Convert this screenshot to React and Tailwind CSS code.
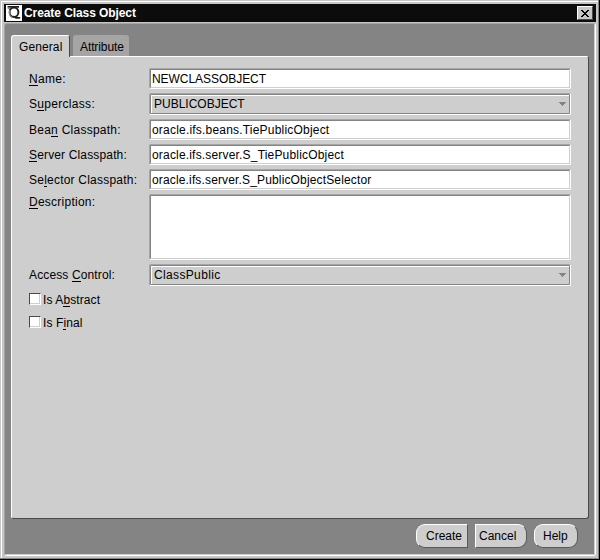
import React, { useState } from "react";
import clsx from "clsx";

// Label with an underlined mnemonic letter
const Label = ({ text, mnemonic, className }) => (
  <span className={clsx("block whitespace-pre leading-[14px]", className)}>
    {text.slice(0, mnemonic)}
    <span className="border-b border-black inline-block h-[14px]">
      {text[mnemonic]}
    </span>
    {text.slice(mnemonic + 1)}
  </span>
);

const Row = ({ text, mnemonic, spacing, className, labelPad = "pt-1", children }) => (
  <div className={clsx("flex", className)}>
    <div className={clsx("w-[120px] shrink-0", labelPad)}>
      <Label text={text} mnemonic={mnemonic} className={spacing} />
    </div>
    {children}
  </div>
);

const Field = ({ value, spacing, className }) => (
  <div
    className={clsx(
      "w-[422px] rounded-[2px] border border-t-[#a5a5a5] border-l-[#a5a5a5] border-r-white border-b-white",
      className
    )}
  >
    <div className="h-full rounded-[1px] border border-t-[#848484] border-l-[#848484] border-r-[#cecece] border-b-[#cecece] bg-white pl-px pt-[2px]">
      <span className={clsx("block leading-[14px]", spacing)}>{value}</span>
    </div>
  </div>
);

const Combo = ({ value, spacing }) => (
  <div className="h-[22px] w-[422px] rounded-[2px] border border-t-[#a5a5a5] border-l-[#a5a5a5] border-r-white border-b-white">
    <div className="h-full rounded-[1px] border border-[#848484]">
      <div className="flex h-full items-start justify-between border-l border-t border-white pl-[2px] pr-[3px]">
        <span className={clsx("mt-px block leading-[14px]", spacing)}>{value}</span>
        <svg
          className="mt-[6px]"
          width="7"
          height="4"
          viewBox="0 0 7 4"
          shapeRendering="crispEdges"
        >
          <path d="M0 0h7v1H0zM1 1h5v1H1zM2 2h3v1H2zM3 3h1v1H3z" fill="#848484" />
        </svg>
      </div>
    </div>
  </div>
);

const Check = ({ text, mnemonic, spacing, className }) => {
  const [checked, setChecked] = useState(false);
  return (
    <div
      className={clsx("flex w-fit", className)}
      onClick={() => setChecked(!checked)}
    >
      <div className="h-3 w-3 border border-t-[#4a4a4a] border-l-[#4a4a4a] border-r-white border-b-white">
        <div className="h-full border-b border-r border-[#cecece] bg-white text-[9px] leading-[9px]">
          {checked && "✓"}
        </div>
      </div>
      <Label
        text={text}
        mnemonic={mnemonic}
        className={clsx("ml-[2px]", spacing)}
      />
    </div>
  );
};

const Button = ({ label, className }) => (
  <button
    className={clsx(
      "block h-6 border border-t-white border-l-white border-r-[#5a5a5a] border-b-[#5a5a5a] bg-[#cecece] text-left leading-[14px]",
      className
    )}
  >
    {label}
  </button>
);

const App = () => {
  return (
    <div className="h-[560px] w-[600px] overflow-hidden border-b border-r border-black bg-[#c6c6c6] font-['Liberation_Sans',sans-serif] text-[12px] text-black">
      <div className="h-full border-b border-r border-[#848484]">
        <div className="h-full border border-[#c6c6c6] border-b-0 border-r-0">
          <div className="flex h-full flex-col border-l border-t border-white pb-[2px] pl-[2px] pr-[2px] pt-[2px]">
            {/* title bar */}
            <div className="flex h-[18px] shrink-0 items-center bg-[#0c0c0c] pl-[2px] pr-[3px]">
              <svg width="16" height="16" viewBox="0 0 16 16">
                <path d="M0 0h16v16H0z" fill="#fff" />
                <path d="M1.5 2.5L4 4.5" stroke="#848484" strokeWidth="1.5" />
                <ellipse cx="8" cy="7.3" rx="4.4" ry="4.7" fill="#fff" stroke="#1c1c1c" strokeWidth="1.9" />
                <path d="M3.6 5v4.5q.6 2.5 3 3" fill="none" stroke="#848484" strokeWidth="1.2" />
                <path d="M1 1h12v1.8H3z" fill="#1c1c1c" />
                <path d="M8 12h6.5l-.8 1.8H9.5z" fill="#1c1c1c" />
              </svg>
              <span className="ml-[2px] font-bold leading-[14px] tracking-[-0.08px] text-white">
                Create Class Object
              </span>
              <button className="ml-auto flex h-[14px] w-4 items-center justify-center border border-t-white border-l-white border-r-[#4a4a4a] border-b-[#4a4a4a] bg-[#c6c6c6]">
                <svg width="8" height="7" viewBox="0 0 8 7" shapeRendering="crispEdges">
                  <path
                    d="M0 0h2v1H0zM6 0h2v1H6zM1 1h2v1H1zM5 1h2v1H5zM2 2h4v1H2zM3 3h2v1H3zM2 4h4v1H2zM1 5h2v1H1zM5 5h2v1H5zM0 6h2v1H0zM6 6h2v1H6z"
                    fill="#000"
                  />
                </svg>
              </button>
            </div>

            {/* window body */}
            <div className="mt-px flex-1 rounded-[3px] border border-t-[#a5a5a5] border-l-[#a5a5a5] border-r-white border-b-white">
              <div className="flex h-full flex-col rounded-[2px] border border-t-[#848484] border-l-[#848484] border-r-[#cecece] border-b-[#cecece] bg-[#848484] pl-[5px] pr-[5px]">
                <div className="mt-[10px] flex h-[21px] items-end">
                  <div className="relative z-10 -mb-px h-[22px] w-[59px] rounded-t-[3px] border-l border-t border-r border-l-white border-t-white border-r-[#4a4a4a] bg-[#cecece] pl-[7px] pt-[4px] leading-[14px] tracking-[0.1px]">
                    General
                  </div>
                  <div className="ml-[3px] h-[21px] w-14 rounded-t-[3px] bg-[#a5a5a5] pl-[7px] pt-[5px] leading-[14px] tracking-[-0.1px]">
                    Attribute
                  </div>
                </div>
                <div className="h-[463px] rounded-[3px] rounded-tl-none border border-t-white border-l-white border-r-[#4a4a4a] border-b-[#4a4a4a] bg-[#cecece] pl-[17px] pt-[11px]">
                  <Row text="Name:" mnemonic={0} spacing="tracking-[0.3px]">
                    <Field value="NEWCLASSOBJECT" spacing="tracking-[-0.05px]" className="h-[21px]" />
                  </Row>
                  <Row text="Superclass:" mnemonic={1} spacing="tracking-[0.3px]" className="mt-1">
                    <Combo value="PUBLICOBJECT" />
                  </Row>
                  <Row text="Bean Classpath:" mnemonic={3} spacing="tracking-[0.25px]" className="mt-1">
                    <Field value="oracle.ifs.beans.TiePublicObject" spacing="tracking-[0.2px]" className="h-[21px]" />
                  </Row>
                  <Row text="Server Classpath:" mnemonic={0} spacing="tracking-[0.15px]" className="mt-1">
                    <Field value="oracle.ifs.server.S_TiePublicObject" spacing="tracking-[0.18px]" className="h-[21px]" />
                  </Row>
                  <Row text="Selector Classpath:" mnemonic={2} spacing="tracking-[0.22px]" className="mt-1">
                    <Field value="oracle.ifs.server.S_PublicObjectSelector" spacing="tracking-[0.15px]" className="h-[21px]" />
                  </Row>
                  <Row text="Description:" mnemonic={0} spacing="tracking-[0.25px]" className="mt-1" labelPad="pt-px">
                    <Field value="" className="h-[66px]" />
                  </Row>
                  <Row text="Access Control:" mnemonic={7} spacing="tracking-[0.13px]" className="mt-1">
                    <Combo value="ClassPublic" spacing="tracking-[0.35px]" />
                  </Row>
                  <Check text="Is Abstract" mnemonic={4} spacing="tracking-[0.1px]" className="mt-[7px]" />
                  <Check text="Is Final" mnemonic={4} spacing="tracking-[0.1px]" className="mt-[9px]" />
                </div>
                <div className="mt-[5px] flex justify-end pr-[11px]">
                  <Button label="Create" className="w-[52px] rounded-l-[9px] pl-[9px]" />
                  <Button label="Cancel" className="ml-[7px] w-[52px] rounded-r-[9px] pl-[3px]" />
                  <Button label="Help" className="ml-[7px] w-11 rounded-[9px] pl-2" />
                </div>
              </div>
            </div>
          </div>
        </div>
      </div>
    </div>
  );
};

export default App;
